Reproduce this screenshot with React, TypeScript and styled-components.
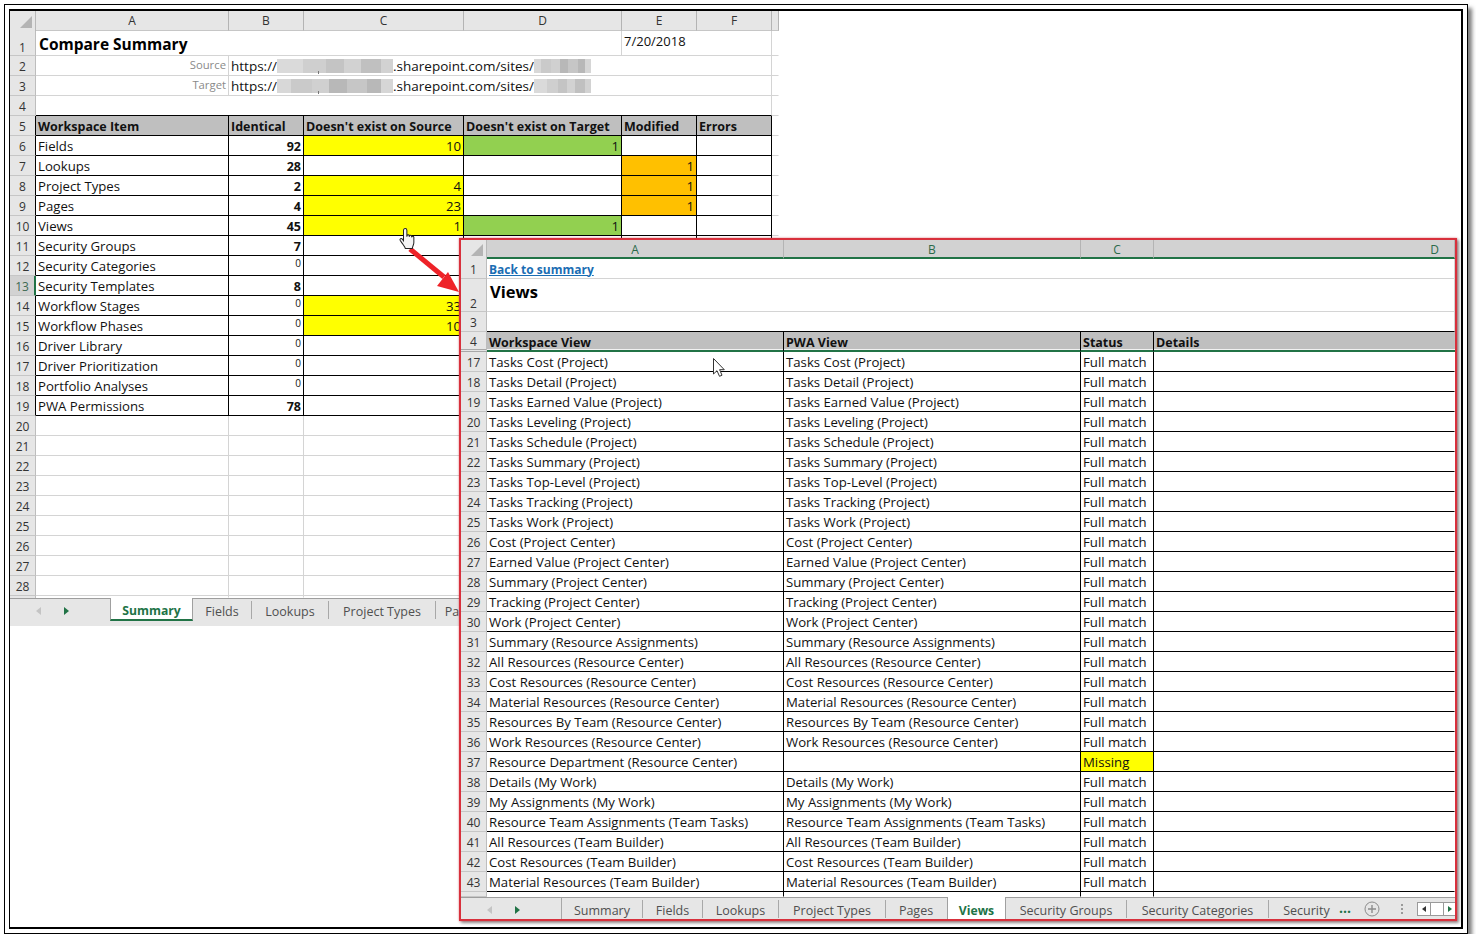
import React from "react";
import styled, { createGlobalStyle, css } from "styled-components";

const GlobalStyle = createGlobalStyle`
  html, body { margin: 0; padding: 0; background: #fff; }
  body { font-family: "Open Sans", "Noto Sans", sans-serif; color: #111; }
`;

const Outer = styled.div`
  box-sizing: border-box;
  margin: 4px 0 0 4px;
  width: 1464px;
  height: 930px;
  padding: 4px;
  border: 1px solid #000;
  box-shadow: 4px 4px 4px #7d7d7d;
  background: #fff;
`;
const Inner = styled.div`
  box-sizing: border-box;
  position: relative;
  width: 100%;
  height: 100%;
  border: solid #000;
  border-width: 2px 2px 2px 1px;
  background: #fff;
`;
const LeftWindow = styled.div`
  width: 769px;
  display: flex;
  flex-direction: column;
`;
const RightWindow = styled.div`
  box-sizing: border-box;
  position: absolute;
  left: 449px;
  top: 227px;
  width: 998px;
  height: 683px;
  border: 2px solid #d8303c;
  box-shadow: 0 0 2px rgba(216, 48, 60, 0.55), 2px 2px 3px rgba(0, 0, 0, 0.45);
  background: #fff;
  display: flex;
  flex-direction: column;
  overflow: hidden;
`;
const Row = styled.div<{ $cols: string; $h: number }>`
  display: grid;
  grid-template-columns: ${(p) => p.$cols};
  grid-template-rows: minmax(0, 1fr);
  height: ${(p) => p.$h}px;
  flex: none;
`;
const Cell = styled.div<{
  $fill?: string;
  $span?: number;
  $right?: boolean;
  $bold?: boolean;
  $line?: "black" | "light" | "none";
  $lineB?: "black" | "light" | "none";
  $top?: number;
  $tiny?: boolean;
  $big?: number;
}>`
  box-sizing: border-box;
  min-width: 0;
  min-height: 0;
  display: flex;
  align-items: center;
  justify-content: ${(p) => (p.$right ? "flex-end" : "flex-start")};
  padding: ${(p) => (p.$bold || p.$big ? "2px" : "0")} 2px 0;
  white-space: nowrap;
  line-height: 16px;
  font-size: ${(p) => (p.$bold ? 12.5 : 13.2)}px;
  font-weight: ${(p) => (p.$bold ? 700 : 400)};
  background: ${(p) => p.$fill || "transparent"};
  grid-column: span ${(p) => p.$span || 1};
  border-right: 1px solid
    ${(p) => (p.$line === "black" ? "#000" : p.$line === "none" ? "transparent" : "#d4d4d4")};
  border-bottom: 1px solid
    ${(p) => (p.$lineB === "black" ? "#000" : p.$lineB === "none" ? "transparent" : "#d4d4d4")};
  ${(p) =>
    p.$top !== undefined &&
    css`
      align-items: flex-start;
      padding-top: ${p.$top}px;
      line-height: 22px;
    `}
  ${(p) =>
    p.$tiny &&
    css`
      font-size: 10px;
      align-items: flex-start;
      padding-top: 1px;
      line-height: 13px;
    `}
  ${(p) =>
    p.$big &&
    css`
      font-size: ${p.$big}px;
      font-weight: 700;
      color: #000;
      padding-left: 3px;
    `}
`;
const Corner = styled.div`
  position: relative;
  box-sizing: border-box;
  background: #e6e6e6;
  border-right: 1px solid #b8b8b8;
  &::after {
    content: "";
    position: absolute;
    right: 3px;
    bottom: 3px;
    width: 12px;
    height: 12px;
    background: #b4b4b4;
    clip-path: polygon(100% 0, 100% 100%, 0 100%);
  }
`;
const ColHead = styled.div<{ $selected?: boolean; $end?: boolean }>`
  box-sizing: border-box;
  display: flex;
  align-items: center;
  justify-content: ${(p) => (p.$end ? "flex-end" : "center")};
  padding: ${(p) => (p.$selected ? "2px" : "0")} ${(p) => (p.$end ? "15px" : "0")} 0 0;
  font-size: 12px;
  line-height: 15px;
  background: ${(p) => (p.$selected ? "#d2d2d2" : "#e6e6e6")};
  color: ${(p) => (p.$selected ? "#2b6a4a" : "#333")};
  border-right: 1px solid #b4b4b4;
  border-bottom: ${(p) => (p.$selected ? "2px solid #217346" : "1px solid #c6c6c6")};
`;
const RowHead = styled.div<{
  $line?: "black" | "green";
  $active?: boolean;
  $bottom?: boolean;
  $double?: boolean;
}>`
  box-sizing: border-box;
  min-height: 0;
  display: flex;
  justify-content: center;
  align-items: ${(p) => (p.$bottom ? "flex-end" : "center")};
  padding-top: ${(p) => (p.$bottom ? "0" : "2px")};
  font-size: 12px;
  line-height: 15px;
  color: ${(p) => (p.$active ? "#3d6a52" : "#333")};
  background: ${(p) => (p.$active ? "#d2d2d2" : "#e6e6e6")};
  border-right: ${(p) =>
    p.$line === "black"
      ? "1px solid #000"
      : p.$line === "green"
      ? "2px solid #217346"
      : "1px solid #bdbdbd"};
  border-bottom: ${(p) => (p.$double ? "3px double #a8a8a8" : "1px solid #c6c6c6")};
`;
const Url = styled.span`
  display: flex;
  align-items: center;
  font-size: 13.5px;
`;
const Redact = styled.span<{ $w: number; $alt?: boolean; $tick?: boolean }>`
  position: relative;
  display: inline-block;
  flex: none;
  width: ${(p) => p.$w}px;
  height: 14px;
  filter: blur(0.5px);
  background: ${(p) =>
    p.$alt
      ? "linear-gradient(90deg,#d8d8d8 0 12%,#cacaca 12% 30%,#d0d0d0 30% 45%,#b8b8b8 45% 60%,#c6c6c6 60% 78%,#b8b8b8 78% 90%,#d6d6d6 90% 100%)"
      : "linear-gradient(90deg,#dadada 0 22%,#cfcfcf 22% 42%,#c4c4c4 42% 58%,#d2d2d2 58% 72%,#c0c0c0 72% 90%,#d2d2d2 90% 100%)"};
  ${(p) =>
    p.$tick &&
    css`
      &::after {
        content: "";
        position: absolute;
        left: 41px;
        bottom: -1px;
        width: 1px;
        height: 3px;
        background: #777;
      }
    `}
`;
const Muted = styled.span`
  color: #8a8a8a;
  font-size: 11.3px;
  position: relative;
  top: -1px;
`;
const DateText = styled.span`
  position: relative;
  top: -2px;
  font-size: 13px;
`;
const Link = styled.a`
  color: #1a6db3;
  font-size: 12px;
  font-weight: 700;
  text-decoration: underline;
  position: relative;
  top: 1px;
`;
const TabBar = styled.div<{ $h: number }>`
  box-sizing: border-box;
  flex: none;
  height: ${(p) => p.$h}px;
  display: flex;
  align-items: flex-start;
  background: #e6e6e6;
  border-top: 1px solid #9e9e9e;
`;
const Nav = styled.div<{ $w: number; $sep?: boolean }>`
  box-sizing: border-box;
  flex: none;
  width: ${(p) => p.$w}px;
  height: 24px;
  display: flex;
  align-items: center;
  padding-left: 26px;
  gap: 23px;
  border-right: ${(p) => (p.$sep ? "1px solid #a8a8a8" : "none")};
`;
const Tri = styled.span<{ $dir: "l" | "r"; $on?: boolean; $s?: number }>`
  flex: none;
  width: 0;
  height: 0;
  border-top: ${(p) => p.$s || 4}px solid transparent;
  border-bottom: ${(p) => p.$s || 4}px solid transparent;
  ${(p) =>
    p.$dir === "l"
      ? css`
          border-right: ${(p.$s || 4) + 1}px solid ${p.$on ? "#333" : "#c4c4c4"};
        `
      : css`
          border-left: ${(p.$s || 4) + 1}px solid ${p.$on ? "#217346" : "#c4c4c4"};
        `}
`;
const Tab = styled.div<{ $active?: boolean; $under?: boolean; $plain?: boolean; $w: number; $pad?: number }>`
  box-sizing: border-box;
  flex: none;
  width: ${(p) => p.$w}px;
  display: flex;
  align-items: center;
  justify-content: center;
  height: ${(p) => (p.$active ? 23 : 18)}px;
  margin-top: ${(p) => (p.$active ? -1 : 2)}px;
  padding-top: 2px;
  padding-left: ${(p) => p.$pad || 0}px;
  font-size: 12.5px;
  color: #505050;
  white-space: nowrap;
  border-right: 1px solid ${(p) => (p.$plain ? "transparent" : "#a8a8a8")};
  ${(p) =>
    p.$active &&
    css`
      background: #fff;
      color: #217346;
      font-size: 12.2px;
      font-weight: 700;
      padding-top: 3px;
      border-left: 1px solid #a0a0a0;
      border-right: 1px solid #a0a0a0;
    `}
  ${(p) =>
    p.$under &&
    css`
      border-bottom: 2px solid #217346;
    `}
`;
const Ellipsis = styled.span`
  flex: none;
  width: 25px;
  color: #217346;
  font-weight: 700;
  font-size: 14px;
  line-height: 20px;
`;
const Tools = styled.div`
  display: flex;
  align-items: center;
  height: 21px;
  flex: none;
`;
const Dots = styled.span`
  width: 2px;
  height: 12px;
  margin: 0 15px 0 21px;
  background: radial-gradient(circle, #9a9a9a 1px, transparent 1px) 0 0 / 2px 4px;
`;
const ScrollBtn = styled.span`
  box-sizing: border-box;
  width: 14px;
  height: 14px;
  background: #fff;
  border: 1px solid #9a9a9a;
  margin-left: -1px;
  display: flex;
  align-items: center;
  justify-content: center;
`;
const HeaderCell = styled.div`
  box-sizing: border-box;
  min-height: 0;
  display: flex;
  align-items: center;
  padding: 2px 2px 0;
  font-size: 12.5px;
  line-height: 15px;
  font-weight: 700;
  background: #bfbfbf;
  border-right: 1px solid #000;
  border-bottom: 2px solid #217346;
  box-shadow: inset 0 -1px 0 #f2f2f2;
  &:last-child {
    border-right: none;
  }
`;
const Overlay = styled.svg<{ $x: number; $y: number }>`
  position: absolute;
  left: ${(p) => p.$x}px;
  top: ${(p) => p.$y}px;
  overflow: visible;
`;

const L = "26px 193px 75px 160px 158px 75px 75px 7px";
const R = "26px 297px 297px 73px 301px";
const Y = "#ffff00";
const G = "#92d050";
const O = "#ffc000";

type D = { n: number; a: string; b?: number; c?: number; d?: number; e?: number };
const left: D[] = [
  { n: 6, a: "Fields", b: 92, c: 10, d: 1 },
  { n: 7, a: "Lookups", b: 28, e: 1 },
  { n: 8, a: "Project Types", b: 2, c: 4, e: 1 },
  { n: 9, a: "Pages", b: 4, c: 23, e: 1 },
  { n: 10, a: "Views", b: 45, c: 1, d: 1 },
  { n: 11, a: "Security Groups", b: 7 },
  { n: 12, a: "Security Categories", b: 0 },
  { n: 13, a: "Security Templates", b: 8 },
  { n: 14, a: "Workflow Stages", b: 0, c: 33 },
  { n: 15, a: "Workflow Phases", b: 0, c: 10 },
  { n: 16, a: "Driver Library", b: 0 },
  { n: 17, a: "Driver Prioritization", b: 0 },
  { n: 18, a: "Portfolio Analyses", b: 0 },
  { n: 19, a: "PWA Permissions", b: 78 },
];
const views = [
  "Tasks Cost (Project)", "Tasks Detail (Project)", "Tasks Earned Value (Project)",
  "Tasks Leveling (Project)", "Tasks Schedule (Project)", "Tasks Summary (Project)",
  "Tasks Top-Level (Project)", "Tasks Tracking (Project)", "Tasks Work (Project)",
  "Cost (Project Center)", "Earned Value (Project Center)", "Summary (Project Center)",
  "Tracking (Project Center)", "Work (Project Center)", "Summary (Resource Assignments)",
  "All Resources (Resource Center)", "Cost Resources (Resource Center)",
  "Material Resources (Resource Center)", "Resources By Team (Resource Center)",
  "Work Resources (Resource Center)", "Resource Department (Resource Center)",
  "Details (My Work)", "My Assignments (My Work)", "Resource Team Assignments (Team Tasks)",
  "All Resources (Team Builder)", "Cost Resources (Team Builder)", "Material Resources (Team Builder)",
];

const Num = ({ v, fill }: { v?: number; fill?: string }) => (
  <Cell $right $line="black" $lineB="black" $fill={fill}>
    {v}
  </Cell>
);

function UrlRow({ n, label, alt }: { n: number; label: string; alt?: boolean }) {
  return (
    <Row $cols={L} $h={20}>
      <RowHead>{n}</RowHead>
      <Cell $right>
        <Muted>{label}</Muted>
      </Cell>
      <Cell $span={5}>
        <Url>
          https://
          <Redact $w={116} $alt={alt} $tick />
          .sharepoint.com/sites/
          <Redact $w={57} $alt={!alt} />
        </Url>
      </Cell>
      <Cell $line="none" />
    </Row>
  );
}

function LeftSheet() {
  const blanks = Array.from({ length: 9 }, (_, i) => i + 20);
  return (
    <LeftWindow>
      <Row $cols={L} $h={20}>
        <Corner />
        {["A", "B", "C", "D", "E", "F"].map((c) => (
          <ColHead key={c}>{c}</ColHead>
        ))}
        <ColHead />
      </Row>
      <Row $cols={L} $h={25}>
        <RowHead $bottom>1</RowHead>
        <Cell $span={4} $big={15.5}>
          Compare Summary
        </Cell>
        <Cell $span={2}>
          <DateText>7/20/2018</DateText>
        </Cell>
        <Cell $line="none" />
      </Row>
      <UrlRow n={2} label="Source" />
      <UrlRow n={3} label="Target" alt />
      <Row $cols={L} $h={20}>
        <RowHead>4</RowHead>
        <Cell $span={6} $lineB="black" />
        <Cell $line="none" />
      </Row>
      <Row $cols={L} $h={20}>
        <RowHead $line="black">5</RowHead>
        {["Workspace Item", "Identical", "Doesn't exist on Source", "Doesn't exist on Target", "Modified", "Errors"].map((t) => (
          <Cell key={t} $bold $fill="#bfbfbf" $line="black" $lineB="black">
            {t}
          </Cell>
        ))}
        <Cell $line="none" />
      </Row>
      {left.map((r) => (
        <Row key={r.n} $cols={L} $h={20}>
          <RowHead $line={r.n === 13 ? "green" : "black"} $active={r.n === 13}>
            {r.n}
          </RowHead>
          <Cell $line="black" $lineB="black">
            {r.a}
          </Cell>
          <Cell $right $bold={r.b !== 0} $tiny={r.b === 0} $line="black" $lineB="black">
            {r.b}
          </Cell>
          <Num v={r.c} fill={r.c ? Y : undefined} />
          <Num v={r.d} fill={r.d ? G : undefined} />
          <Num v={r.e} fill={r.e ? O : undefined} />
          <Num />
          <Cell $line="none" />
        </Row>
      ))}
      {blanks.map((n) => (
        <Row key={n} $cols={L} $h={20}>
          <RowHead>{n}</RowHead>
          <Cell />
          <Cell />
          <Cell $span={3} $line="none" />
          <Cell />
          <Cell $line="none" />
        </Row>
      ))}
      <Row $cols={L} $h={2}>
        <RowHead />
        <Cell $lineB="none" />
        <Cell $lineB="none" />
        <Cell $span={3} $line="none" $lineB="none" />
        <Cell $lineB="none" />
      </Row>
      <TabBar $h={28}>
        <Nav $w={100}>
          <Tri $dir="l" />
          <Tri $dir="r" $on />
        </Nav>
        <Tab $active $under $w={83}>
          Summary
        </Tab>
        <Tab $w={59}>Fields</Tab>
        <Tab $w={77}>Lookups</Tab>
        <Tab $w={107}>Project Types</Tab>
        <Tab $w={33} $plain>
          Pa
        </Tab>
      </TabBar>
    </LeftWindow>
  );
}

function RightSheet() {
  return (
    <RightWindow>
      <Row $cols={R} $h={19}>
        <Corner />
        <ColHead $selected>A</ColHead>
        <ColHead $selected>B</ColHead>
        <ColHead $selected>C</ColHead>
        <ColHead $selected $end>
          D
        </ColHead>
      </Row>
      <Row $cols={R} $h={20}>
        <RowHead>1</RowHead>
        <Cell $span={4}>
          <Link>Back to summary</Link>
        </Cell>
      </Row>
      <Row $cols={R} $h={33}>
        <RowHead $bottom>2</RowHead>
        <Cell $span={4} $big={16.5} $top={2}>
          Views
        </Cell>
      </Row>
      <Row $cols={R} $h={20}>
        <RowHead>3</RowHead>
        <Cell $span={4} $lineB="black" />
      </Row>
      <Row $cols={R} $h={20}>
        <RowHead $double>4</RowHead>
        {["Workspace View", "PWA View", "Status", "Details"].map((t) => (
          <HeaderCell key={t}>{t}</HeaderCell>
        ))}
      </Row>
      {views.map((v, i) => {
        const missing = i + 17 === 37;
        return (
          <Row key={v} $cols={R} $h={20}>
            <RowHead>{i + 17}</RowHead>
            <Cell $line="black" $lineB="black">
              {v}
            </Cell>
            <Cell $line="black" $lineB="black">
              {missing ? "" : v}
            </Cell>
            <Cell $line="black" $lineB="black" $fill={missing ? Y : undefined}>
              {missing ? "Missing" : "Full match"}
            </Cell>
            <Cell $line="none" $lineB="black" />
          </Row>
        );
      })}
      <Row $cols={R} $h={5}>
        <RowHead />
        <Cell $line="black" $lineB="none" />
        <Cell $line="black" $lineB="none" />
        <Cell $line="black" $lineB="none" />
        <Cell $line="none" $lineB="none" />
      </Row>
      <TabBar $h={23}>
        <Nav $w={101} $sep>
          <Tri $dir="l" />
          <Tri $dir="r" $on />
        </Nav>
        <Tab $w={81}>Summary</Tab>
        <Tab $w={60}>Fields</Tab>
        <Tab $w={76}>Lookups</Tab>
        <Tab $w={107}>Project Types</Tab>
        <Tab $w={61} $plain>
          Pages
        </Tab>
        <Tab $active $w={59}>
          Views
        </Tab>
        <Tab $w={121}>Security Groups</Tab>
        <Tab $w={142}>Security Categories</Tab>
        <Tab $w={70} $plain $pad={6}>
          Security
        </Tab>
        <Ellipsis>...</Ellipsis>
        <Tools>
          <svg width="16" height="16" viewBox="0 0 16 16" fill="none" stroke="#8c8c8c">
            <circle cx="8" cy="8" r="7" />
            <path d="M8 4v8M4 8h8" strokeWidth="1.4" />
          </svg>
          <Dots />
          <ScrollBtn>
            <Tri $dir="l" $on $s={3} />
          </ScrollBtn>
          <ScrollBtn />
          <ScrollBtn>
            <Tri $dir="r" $on $s={3} />
          </ScrollBtn>
        </Tools>
      </TabBar>
    </RightWindow>
  );
}

export default function App() {
  return (
    <>
      <GlobalStyle />
      <Outer>
        <Inner>
          <LeftSheet />
          <RightSheet />
          <Overlay $x={390} $y={234} width="62" height="52" viewBox="0 0 62 52">
            <path d="M10 4 L44 32" stroke="#ee2228" strokeWidth="5" />
            <path d="M59 47 L37 41 L48 27 Z" fill="#ee2228" />
          </Overlay>
          <Overlay $x={389} $y={216} width="18" height="24" viewBox="0 0 16 21">
            <path
              d="M5.5 1.2c.9 0 1.5.6 1.5 1.5V8.5l.1-1c.2-1 1.9-1 2 0v1l.2-.7c.3-.9 1.8-.8 1.9.2v1l.2-.5c.3-.8 1.8-.6 1.8.4v4.6c0 1.9-1 3-1.4 5.4H5.6c-.3-1.5-1.5-2.6-3.2-5.2L1 11.6c-.6-1.2 1-2.2 2-1l1 1.4V2.7c0-.9.6-1.5 1.5-1.5z"
              fill="#f4f4f4"
              stroke="#222"
              strokeWidth="0.9"
            />
          </Overlay>
          <Overlay $x={703} $y={347} width="12" height="19" viewBox="0 0 12 19">
            <path
              d="M.5.5V16L4 12.7 6.5 18.3 9 17.2 6.6 11.7H11.3Z"
              fill="#fff"
              stroke="#333"
              strokeWidth="1"
            />
          </Overlay>
        </Inner>
      </Outer>
    </>
  );
}
